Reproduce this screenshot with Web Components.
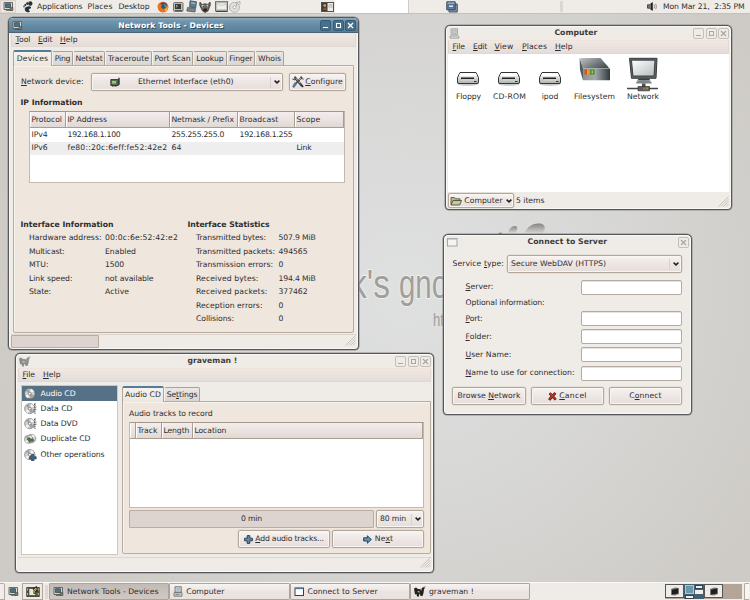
<!DOCTYPE html>
<html lang="en"><head><meta charset="utf-8"><title>Desktop</title>
<style>
html,body{margin:0;width:750px;height:600px;overflow:hidden}
body{font:7.7px "DejaVu Sans",sans-serif;color:#2d2d2d}
</style></head><body>
<desk-top></desk-top>
<script>
const make=(name,css,html,init)=>customElements.define(name,class extends HTMLElement{
  connectedCallback(){
    if(this.shadowRoot)return;
    const a=k=>this.getAttribute(k)||'';
    this.attachShadow({mode:'open'}).innerHTML=`<style>*{box-sizing:border-box}${css}</style>`+(typeof html==='function'?html(a):html);
    if(init)init(this,a);
  }
});

/* Text run spaced to an exact width */
make('tx-t',':host{display:inline-block;white-space:pre;flex:none;line-height:12px}:host([b]){font-weight:bold}span{display:inline-block}::slotted(u){text-decoration:underline;text-underline-offset:1px}','<span><slot></slot></span>',(el,a)=>{
  const w=+a('w');if(!w)return;
  const s=el.shadowRoot.querySelector('span'),n=el.textContent.length;
  s.style.letterSpacing=(w-s.getBoundingClientRect().width)/n+'px';
  el.style.width=w+'px';
});

const monitor='<path d="M1 1.5h8.5v7H1z" fill="#d5d6ce" stroke="#5c5f58" stroke-width=".9"/><path d="M2.5 2.7h5v3.8h-5z" fill="#4c7185" stroke="#2d3f48" stroke-width=".7"/><path d="M2.8 9.2h6" stroke="#4b4b46"/><path d="M7 6.5h3v3H7z" fill="#757a70" stroke="#444" stroke-width=".5"/>';
const disc='<ellipse cx="5.8" cy="5.6" rx="5.2" ry="5" fill="#d0d0d0" stroke="#666" stroke-width=".6"/><path d="M5.8 5.6L1.5 3A5 5 0 0 1 5 .8zM5.8 5.6l4.5 2a5 5 0 0 1-4 3z" fill="#a3a3a3"/><path d="M5.8 5.6L7 .9a5 5 0 0 1 2.9 2.3zM5.8 5.6l-2 4.4a5 5 0 0 1-2.3-2z" fill="#f5f5f5"/><circle cx="5.8" cy="5.6" r="1.5" fill="#eee" stroke="#555" stroke-width=".6"/>';
const animal=c=>`<g fill="${c}"><path d="M0 2.500l2-1 2 1.500 3 .3 2-2.300 2.500-.5L10 3.500 9.500 7 8.500 10H6.500L6 8 5 8.500V10.500H3L2.500 8 1 8.500z"/></g><path d="M3 6l2-1 1 1.500zM8.500 2l1.800-1L11 1.500z" fill="#dfe0d8"/><path d="M6 4l2-1v1.500z" fill="#c5b045"/>`;
const drive='<defs><linearGradient id="d" x2="0" y2="1"><stop stop-color="#fff"/><stop offset="1" stop-color="#aeb1ae"/></linearGradient></defs><ellipse cx="12" cy="12.6" rx="11" ry="2.3" fill="#ccc"/><path d="M4 1.500h16l2.500 5v4.500q0 1.500-1.500 1.500H3q-1.500 0-1.500-1.500V6.500z" fill="url(#d)" stroke="#343434" stroke-width="1"/><path d="M4 2.500h16l1 2.500H3z" fill="#fff"/><path d="M5 7.300h13" stroke="#222" stroke-width="1.800"/><path d="M5.500 8.700h12.500" stroke="#fff" stroke-width=".6"/><path d="M18 10.500h2.500" stroke="#333"/>';
const ICONS={
 monitor:[11,11,monitor],
 foot:[10,12,'<g fill="#26333a"><ellipse cx="7.300" cy="2.500" rx="2.200" ry="2.200"/><ellipse cx="4.200" cy="2.500" rx="1" ry="1.500"/><ellipse cx="2.300" cy="3.900" rx=".85" ry="1.200"/><ellipse cx="1" cy="5.500" rx=".7" ry="1"/><path d="M1.700 7.500C3 5 7.500 4.600 8 6.300c.4 1.500-2 1.400-2.200 2.500-.1.900 1 .5 1 1.500C6.500 12 2.800 11.500 2 9.500z"/></g>'],
 firefox:[12,12,'<circle cx="6" cy="6" r="5.300" fill="#d9581b"/><circle cx="6.400" cy="5" r="3.600" fill="#27557f"/><path d="M7 2.500l2.500 2L8 7z" fill="#5f9bc5"/><path d="M.8 4C1.500 2.500 2.500 2 3.500 3.200L5.500 3.500 4 5.500 5 7.500c2 1 4-.4 4.500-2.500L11 4c1 4-1.500 7.300-5 7.300C2.500 11.300.3 8 .8 4z" fill="#e8751d"/><path d="M8 8.500q2-1 2.500-3.500.7 3.500-2.500 5.500z" fill="#f7c33a"/>'],
 term:[11,10,'<rect x=".5" y=".5" width="9.500" height="9" rx="1" fill="#bcb9b0" stroke="#77736c"/><path d="M2 2h6v5H2z" fill="#3a3a38"/><path d="M3 3.200l1.500 1L3 5.200" stroke="#ddd" fill="none" stroke-width=".7"/><path d="M2 8.500h7" stroke="#555"/>'],
 net:[12,13,'<path d="M4 .8l6.500 1-.8 6-6-.8z" fill="#587f96" stroke="#40494d" stroke-width=".8"/><path d="M5 2l4.500.8-.2 1.500L5 3.600z" fill="#95b4c2"/><path d="M1.500 7.500l8 1L9 12 .8 11z" fill="#7c8587" stroke="#464c50" stroke-width=".7"/>'],
 gimp:[12,12,'<path d="M1 1l2 2.500Q6 2 9 3.500L11 1q1 3-.5 5L9 10l-3 1.500L3.500 10 1.500 6Q0 3.500 1 1z" fill="#69645b" stroke="#35322e" stroke-width=".7"/><circle cx="4" cy="5" r="1.300" fill="#ddd"/><circle cx="8" cy="5" r="1.200" fill="#ddd"/><circle cx="4.300" cy="5.200" r=".7" fill="#222"/><circle cx="7.800" cy="5.200" r=".7" fill="#222"/><ellipse cx="6.200" cy="9" rx="2" ry="1.400" fill="#27231f"/>'],
 mail:[13,11,'<rect x=".5" y=".7" width="12" height="9.300" fill="#cfcfca" stroke="#6c6c67"/><rect x="1.800" y="2" width="9.400" height="6.700" fill="#efefeb" stroke="#aaa" stroke-width=".5"/><path d="M1.500 3l5 1.500 5-1.500" stroke="#b5b5b0" fill="none" stroke-width=".6"/><path d="M1 10.500h11.500" stroke="#444"/>'],
 cd:[12,12,'<circle cx="5.500" cy="6.300" r="5" fill="#e0e0de" stroke="#a0a09d" stroke-width=".7"/><circle cx="5.500" cy="6.300" r="1.500" fill="#fff" stroke="#888" stroke-width=".6"/><path d="M7.500 5V1.500l3.500-1v3" stroke="#aaa" fill="none" stroke-width=".9"/>'],
 card:[13,10,'<rect x=".5" y=".5" width="12" height="9" fill="#eeece6" stroke="#55534e"/><path d="M1 1h5.500v8H1z" fill="#3e3b36"/><circle cx="3.700" cy="3.500" r="1.400" fill="#c49570"/><path d="M2 8q0-3 3.500-2.500V8z" fill="#9b4c28"/><path d="M7.500 3h4M7.500 5h2M10 5h1.500" stroke="#888" stroke-width=".7"/>'],
 winlist:[12,12,'<path d="M3 3h8.300v8H3z" fill="#8b98ac" stroke="#455"/><path d="M.8.800h8.400v8H.800z" fill="#5e7fa8" stroke="#37455c"/><path d="M1.500 1.500h7v1.200h-7z" fill="#a9bdd4"/><path d="M2.500 4h5v2.500h-5z" fill="#dce5ef" stroke="#37455c" stroke-width=".6"/>'],
 speaker:[11,9,'<path d="M.5 2.800h2L5.500.500v8l-3-2.300h-2z" fill="#777" stroke="#222" stroke-width=".7"/><path d="M4.500 1v7" stroke="#222"/><path d="M7 2.500q1 2 0 4M8.700 1.800q1.400 2.700 0 5.400" fill="none" stroke="#777" stroke-width=".8"/>'],
 pcoff:[11,11,'<g fill="#dcdbd8" stroke="#9b9b98" stroke-width=".8"><path d="M2 .800h6.500v6H2zM1 8h8.800v2.200H1z"/><path d="M3.500 2h3.700v3.500H3.500z" fill="#bccbd5" stroke-width=".4"/></g>'],
 winoff:[11,9,'<rect x=".5" y=".5" width="9.500" height="7.500" fill="#f4f4f2" stroke="#a5a5a2"/><path d="M1 1.300h8.500" stroke="#bcc8d2"/>'],
 win:[11,10,'<rect x="1" y="1" width="8.500" height="7.500" fill="#fff" stroke="#3a4043"/><path d="M1 1.500h8.500" stroke="#52799a" stroke-width="1.300"/>'],
 animaloff:[12,11,animal('#8e8e8a')],
 animal:[12,11,animal('#23221d')],
 card2:[11,10,'<path d="M.8 2.500h7.500v6H.800z" fill="#54714a" stroke="#222d1c" stroke-width=".8"/><path d="M2 4h4v2.500H2z" fill="#a2c28d"/><path d="M9 .800v7" stroke="#222" stroke-width="1.300"/><path d="M2 9h5" stroke="#222" stroke-dasharray="1 .5"/>'],
 tools:[12,12,'<path d="M2.500 1l7.500 9" stroke="#3c3f40" stroke-width="2.200"/><path d="M3 1.300l5 6" stroke="#bfc1c0" stroke-width="1"/><path d="M10 .8L3 8.500" stroke="#444" stroke-width="1.800"/><path d="M9.500 1.500L7 4" stroke="#b8b8b8" stroke-width=".9"/><path d="M3.500 7.500L1.800 10.300" stroke="#53779b" stroke-width="2.600" stroke-linecap="round"/><path d="M.3 3l2.700 1 1-2-1-1.500M9 .5l.5 2.300L11.700 3" fill="none" stroke="#3f4243" stroke-width=".9"/><path d="M9.500 9.500l1.800 1.300" stroke="#333" stroke-width="1.600"/>'],
 arrow:[6,4,'<path d="M.6.600L3 2.900 5.400.600" fill="none" stroke="#222" stroke-width="1.500"/>'],
 drive:[25,15,drive],
 fs:[32,25,'<defs><linearGradient id="f"><stop stop-color="#8b9293"/><stop offset=".45" stop-color="#a1a9aa"/><stop offset="1" stop-color="#30393b"/></linearGradient><linearGradient id="g" x2="1" y2=".6"><stop stop-color="#c0c5c6"/><stop offset="1" stop-color="#454d4f"/></linearGradient></defs><path d="M1 1h20.500L31 12H4z" fill="url(#g)"/><path d="M4 11.500h27v11.800H4z" fill="url(#f)"/><path d="M.6 1L4 11.500v11.800L1 13z" fill="#535c5e"/><path d="M4 11.500h27" stroke="#c3cacb" stroke-width=".6"/><path d="M5.500 12.500h4.500v5H5.500z" fill="#de4e20"/><path d="M8 12.500h2v5H8z" fill="#f49b2c"/><path d="M11 12.500h4.500v5H11z" fill="#3d8b36"/><path d="M12.500 13.500H14v3h-1.500z" fill="#a4d24d"/>'],
 network:[32,35,'<defs><linearGradient id="n" x2="1" y2="1"><stop stop-color="#fff"/><stop offset="1" stop-color="#b7bcbe"/></linearGradient></defs><path d="M2.500 1.300h27.500l-1 20H4.500z" fill="#62686a" stroke="#363b3c"/><path d="M4.500 3.200h23.500l-1 15.800H6z" fill="url(#n)" stroke="#24292b" stroke-width=".8"/><path d="M12 21.500h10l1.500 2H10z" fill="#3a3f40"/><path d="M9.500 24.500q7-3 14.500 0l1 2H9z" fill="#808586"/><path d="M15 26.500h3.500v4H15z" fill="#4b5051"/><path d="M0 31.500h31" stroke="#424647" stroke-width="1.600"/><path d="M11 29.500h11.500v4.300H11z" fill="#5a5f60" stroke="#333" stroke-width=".7"/><path d="M16 30.500h2.500v2H16z" fill="#e7552d"/><path d="M19 30.500h2v2h-2z" fill="#63a538"/>'],
 folder:[12,10,'<path d="M1 8.500V1.500h3.500l1 1.300H10V5" fill="#b8b98d" stroke="#4d4f38" stroke-width=".8"/><path d="M1 9l2-4.500h8.500L9.700 9z" fill="#c8c99d" stroke="#3f412e" stroke-width=".8"/>'],
 cross:[9,9,'<path d="M1.500 1.200Q4.500 3.500 7.700 7.800M7.500 1Q3.500 4.500 1.200 8" stroke="#4c1b14" stroke-width="2.700" fill="none"/><path d="M1.700 1.400Q4.500 3.500 7.500 7.600M7.300 1.300Q3.500 4.500 1.500 7.700" stroke="#bd3b26" stroke-width="1.500" fill="none"/>'],
 plus:[9,9,'<path d="M3.200.600h2.600v2.600h2.600v2.600H5.800v2.600H3.200V5.800H.600V3.200h2.600z" fill="#6288a8" stroke="#263848" stroke-width=".9"/>'],
 next:[9,9,'<path d="M.6 2.800h3.800V.800l4 3.700-4 3.700V6H.600z" fill="#5d92bd" stroke="#22384a" stroke-width=".9"/>'],
 disc:[13,12,disc],
 discdata:[13,12,disc+'<path d="M10 1.500h2M10 4h2.400M9.500 6.500h2.800M9.500 9h2M11 0v11" stroke="#555" stroke-width=".9" stroke-dasharray="1.300 .7"/>'],
 discdup:[13,12,'<g transform="translate(2.500 .8) scale(.85)">'+disc+'</g><g transform="translate(0 1.800) scale(.8)">'+disc+'</g><path d="M3 6l3-1.500V6h3v2H6v1.500z" fill="#527a43" stroke="#2e4028" stroke-width=".5"/>'],
 discplus:[13,12,disc+'<path d="M7.600 5.500h2.300v2.200h2.300V10H9.900v2H7.600v-2H5.500V7.700h2.100z" fill="#3e658a" stroke="#20384e" stroke-width=".6"/>'],
 pc:[10,11,'<path d="M2 .700h6.300v5.500H2zM1 6.700h8v3.500H1z" fill="#d0d2d0" stroke="#62676a" stroke-width=".8"/><path d="M3.300 2h3.700v2.500H3.300z" fill="#a8bdca"/><path d="M2.500 8.500h4" stroke="#666" stroke-width=".7"/>'],
 lock:[14,12,'<path d="M.7 1.500h12.600v9H.700z" fill="#56583f" stroke="#333" stroke-width=".8"/><path d="M3 2.500h6.500v7H3z" fill="#e8e7df" stroke="#222" stroke-width=".5"/><path d="M7 3.500l3-2 .8 3-2.300.7v2.500" stroke="#1e1e17" stroke-width="2" fill="none"/><path d="M7.500 4l2.500-2v2.300l-1.500.9v1.500" stroke="#e5c04a" fill="none"/><path d="M1.600 2.500v2M1.600 7v2M12.300 2.500v2M12.300 7v2" stroke="#c4c591"/>'],
 grip:[11,11,'<path d="M10.500 .500l-10 10M10.500 3l-7.500 7.500M10.500 5.500l-5 5M10.500 8l-2.500 2.500" stroke="#bdb8b0" stroke-width=".8"/>'],
 mini:[10,9,'<path d="M1 2l4-1.500 4 .5v6L5 8.500 1 8z" fill="#777"/><path d="M2 2.800l6-1.300v5L2 7.500z" fill="#1d1d1d"/>']
};
make('ic-n',':host{display:inline-block;flex:none;line-height:0}svg{display:block}',a=>{const[w,h,s]=ICONS[a('n')];return`<svg width="${w}" height="${h}" viewBox="0 0 ${w} ${h}" fill="none">${s}</svg>`});

/* Row box: width, height and inset from the left */
make('r-ow',':host{display:flex;align-items:center;flex:none}','<slot></slot>',(el,a)=>{
  for(const[k,p]of[['h','height'],['w','width'],['p','paddingLeft'],['m','marginLeft'],['t','marginTop']])if(el.hasAttribute(k))el.style[p]=a(k)+'px';
});

make('app-window',`
:host{position:absolute;display:flex;flex-direction:column;border:1px solid #55575a;border-radius:5px 5px 4px 4px;background:#efebe7;box-shadow:inset 0 0 0 1px #f9f8f6,0 0 0 .5px #8b8b88;overflow:hidden}
header{height:14px;flex:none;display:flex;align-items:center;padding:0 2px 0 3px;color:#3c3c3c}
:host([active]) header{height:15px;background:linear-gradient(#8cabbf 0,#7196ae 20%,#557d96);color:#fff;text-shadow:1px 1px #31505f;box-shadow:inset 0 -1px #456476}
div{flex:1;display:flex;justify-content:center}
i{width:11px;height:11px;flex:none;border:1px solid #c4bfb9;border-radius:2px;margin-left:1.400px;display:grid;place-items:center;color:#aaa7a2}
:host([active]) i{background:#48708a;border-color:#365b72;color:#fff}
b{display:block;width:5px;height:5px}
.m{border-bottom:1.500px solid}.x{border:1px solid;border-top-width:1.500px}
svg{display:block}
section{display:flex;flex-direction:column;flex:1;padding:0 2px}`,
a=>`<header><ic-n n="${a('icon')}"></ic-n><div><tx-t b w="${a('tw')}">${a('label')}</tx-t></div>${a('only')?'':'<i><b class="m"></b></i><i><b class="x"></b></i>'}<i><svg width="7" height="7"><path d="M1 1l5 5M6 1L1 6" stroke="currentColor" stroke-width="1.300"/></svg></i></header><section><slot></slot></section>`,
(el,a)=>{const[x,y,w,h]=a('box').split(',');Object.assign(el.style,{left:x+'px',top:y+'px',width:w+'px',height:h+'px'})});

make('menu-bar',':host{display:flex;align-items:center;height:14px;flex:none;background:linear-gradient(#f1e8e2,#e4dcda);border:1px solid #e3d8d0;border-top-color:#eee4dd;padding-left:3.500px}','<slot></slot>');
make('push-btn',':host{display:flex;align-items:center;justify-content:center;flex:none;border:1px solid #b3a79c;border-radius:2px;background:linear-gradient(#f6f4f2,#efe9e7 40%,#e6dedb);box-shadow:inset 0 0 0 1px #f8f5f2,0 0 0 .5px #ddd5cc;gap:2px}','<slot></slot>',(el,a)=>{el.style.width=a('w')+'px';el.style.height=(a('h')||18)+'px'});
make('combo-box',':host{display:flex;align-items:center;flex:none;border:1px solid #b3a79c;border-radius:2px;background:linear-gradient(#f6f4f2,#efe7e5 40%,#e6dedb);box-shadow:inset 0 0 0 1px #f8f5f2,0 0 0 .5px #ddd5cc}span{flex:1;display:flex;align-items:center}em{width:12px;height:11px;border-left:1px solid #d9d1cb;display:grid;place-items:center}','<span><slot></slot></span><em><ic-n n="arrow"></ic-n></em>',(el,a)=>{el.style.width=a('w')+'px';el.style.height=(a('h')||18)+'px'});
make('tab-head',':host{display:flex;align-items:center;justify-content:center;flex:none;height:14px;border:1px solid #aaa198;border-bottom:0;border-left-color:#f7f4f0;border-radius:2px 2px 0 0;background:linear-gradient(#ece7e3,#dcd6d1)}:host([on]){height:16px;border-color:#b3a79c;border-top:2px solid #567b94;background:linear-gradient(#f5f2ef,#efe6dd);margin-bottom:-1px;position:relative}','<slot></slot>',(el,a)=>el.style.width=a('w')+'px');
make('tab-panel',':host{display:flex;flex-direction:column;flex:none;background:#efe6dd;border:1px solid #b8aca0;box-shadow:inset 1px 1px #f7f2ec;border-radius:0 0 2px 2px}','<slot></slot>',(el,a)=>{el.style.width=a('w')+'px';el.style.height=a('h')+'px'});
make('text-entry',':host{display:block;flex:none;width:101px;height:15px;background:#fff;border:1px solid #b4aaa0;border-radius:2px;box-shadow:inset 0 1px #e7e3df}','');

/* Table: cols = widths; head/row cells are "text~width" separated by | */
make('data-grid',`:host{display:block;flex:none;background:#fff;border:1px solid #c5b9ae;border-top-color:#a3968b}
.r{display:grid;align-items:center;height:13.500px}.e{background:#eee}
.h{height:16px;background:linear-gradient(#f3eded,#e9e1de 60%,#e0d8d2);border-bottom:1px solid #a99d92}
.h span{height:15px;display:flex;align-items:center;border-right:1px solid #a99d92;border-left:1px solid #fff;padding-left:.400px}
.d{padding-left:1.500px}span{white-space:nowrap}`,
a=>{const g=a('cols').split(',').map(v=>v+'px').join(' ');
const row=(s,c)=>`<div class="r ${c}" style="grid-template-columns:${g}">${s.split('|').map(t=>{const[x,w]=t.split('~');return`<span>${x?`<tx-t w="${w}">${x}</tx-t>`:''}</span>`}).join('')}</div>`;
return row(a('head'),'h')+(a('rows')?a('rows').split(';').map((r,i)=>row(r,i%2?'d e':'d')).join(''):'')},
(el,a)=>{el.style.width=a('w')+'px';el.style.height=a('h')+'px'});

make('info-list',':host{display:grid;grid-auto-rows:13.500px;align-items:center}',a=>a('rows').split('|').map(r=>{const[l,lw,v,vw]=r.split('~');return`<tx-t w="${lw}">${l}</tx-t><tx-t w="${vw}">${v}</tx-t>`}).join(''),(el,a)=>el.style.gridTemplateColumns=a('cols'));

make('side-list',`:host{display:block;width:97px;height:170px;background:#fff;border:1px solid #cfc6be;flex:none}
div{height:15.250px;display:flex;align-items:center;gap:3.500px;padding-left:2px}div:first-of-type{background:#567085;color:#fff}`,
()=>[['disc','Audio CD',35],['discdata','Data CD',32],['discdata','Data DVD',37],['discdup','Duplicate CD',50],['discplus','Other operations',64]].map(([i,t,w])=>`<div><ic-n n="${i}"></ic-n><tx-t w="${w}">${t}</tx-t></div>`).join(''));

make('file-item',':host{display:flex;flex-direction:column;align-items:center;justify-content:flex-end;height:46px;flex:none;gap:3px}ic-n{display:flex;align-items:center}',a=>`<ic-n n="${a('icon')}"></ic-n><tx-t w="${a('tw')}">${a('label')}</tx-t>`,(el,a)=>{el.style.width=a('w')+'px';el.shadowRoot.querySelector('ic-n').style.marginBottom=a('up')+'px'});
make('status-grip',':host{margin-left:auto;align-self:flex-end;display:block}','<ic-n n="grip"></ic-n>');
make('progress-bar',':host{display:flex;align-items:center;justify-content:center;flex:none;background:#ddd3cf;border:1px solid #b9aca2;border-radius:1px}','<slot></slot>',(el,a)=>{el.style.width=a('w')+'px';el.style.height=a('h')+'px'});

make('form-row',':host{display:flex;align-items:center;justify-content:space-between;height:18.150px;padding:0 7px 0 19.500px;flex:none}',`<slot></slot><text-entry></text-entry>`);

make('top-panel',`:host{position:absolute;left:0;top:0;width:750px;height:14px;display:flex;align-items:center;background:#efebe7;border-bottom:1px solid #c4c1ba}
.b{width:16px;height:13px;border:1px solid #ddd4d0;background:#eee5e2;display:grid;place-items:center;flex:none}
.s{width:74px;height:13px;background:#fff;border-right:1px solid #ccc;margin-left:1px;flex:none}.q{width:3px;height:11px;background:#ded6d2;margin-left:102px;flex:none}`,
`<div class="b"><ic-n n="monitor"></ic-n></div><r-ow m="7"><ic-n n="foot"></ic-n><r-ow m="4"><tx-t w="45.500">Applications</tx-t></r-ow><r-ow m="5"><tx-t w="25">Places</tx-t></r-ow><r-ow m="6"><tx-t w="31">Desktop</tx-t></r-ow></r-ow>
<r-ow m="7"><ic-n n="firefox"></ic-n></r-ow><r-ow m="4"><ic-n n="term"></ic-n></r-ow><r-ow m="2"><ic-n n="net"></ic-n></r-ow><r-ow m="1"><ic-n n="gimp"></ic-n></r-ow><r-ow m="4"><ic-n n="mail"></ic-n></r-ow><r-ow m="1"><ic-n n="cd"></ic-n></r-ow>
<r-ow m="80"><ic-n n="card"></ic-n></r-ow><div class="s"></div><r-ow m="37"><ic-n n="winlist"></ic-n></r-ow><div class="q"></div><r-ow m="84.500"><ic-n n="speaker"></ic-n></r-ow><r-ow m="5"><tx-t w="81.500">Mon Mar 21,  2:35 PM</tx-t></r-ow>`);

make('task-btn',':host{display:flex;align-items:center;gap:3px;width:120.300px;height:17px;flex:none;border:1px solid #aea49b;border-radius:1px;background:linear-gradient(#f6f3f1,#ece4e2 50%,#e9e2de);padding-left:3px}:host([on]){background:linear-gradient(#c3bbb6,#d0c8c3)}',a=>`<ic-n n="${a('icon')}"></ic-n><tx-t w="${a('tw')}">${a('label')}</tx-t>`);
make('task-bar',`:host{position:absolute;left:0;top:582px;width:750px;height:18px;display:flex;align-items:flex-end;background:#efebe7;border-top:1px solid #faf8f6}
.n{width:5px;height:17px;border:1px solid #b5aaa1;border-left:0;border-radius:0 2px 0 0;background:#f2edea;flex:none}
.m{width:17px;height:17px;display:grid;place-items:center;flex:none}.l{width:21px;height:17px;border:1px solid #b0a69d;background:#efe8e5;display:grid;place-items:center;flex:none}
.q{width:3px;height:14px;background:#dfd7d3;margin:0 1.500px 1px;flex:none}
.p{display:flex;width:77px;height:15px;background:#b5a599;margin:0 2px 1px 135px;flex:none}
.w{width:19px;height:14px;background:#efebe7;border:1px solid #555;display:grid;place-items:center}
.a{width:20px;height:15px;background:#46606f;display:grid;grid-template:9px 4px/9px 8px;gap:1px;padding:.500px 1px;flex:none}.a b{background:#efefee;border:1px solid #34444e}.a b:first-child{background:#6a96b0;border-color:#b1c5d0}.a b:nth-child(2){height:4px;box-shadow:0 5px #efefee}
.e{width:5px;height:17px;border:1px solid #b5aaa1;border-right:0;border-radius:2px 0 0 0;background:#f8f5f3;flex:none}`,
`<div class="n"></div><div class="m"><ic-n n="monitor"></ic-n></div><div class="l"><ic-n n="lock"></ic-n></div><div class="q"></div><task-btn on icon="monitor" label="Network Tools - Devices" tw="91.500"></task-btn><task-btn icon="pc" label="Computer" tw="38"></task-btn><task-btn icon="win" label="Connect to Server" tw="70"></task-btn><task-btn icon="animal" label="graveman !" tw="45"></task-btn>
<div class="p"><div class="w"><ic-n n="mini"></ic-n></div><div class="a"><b></b><b></b><b></b></div><div class="w"><ic-n n="mini"></ic-n></div></div><div class="e"></div>`);

make('wall-paper',':host{position:absolute;inset:0;background:radial-gradient(ellipse 420px 430px at 405px 290px,#dfe0e0 0,#d8d8d7 45%,#cecbc6 100%)}svg{display:block}',
`<svg width="750" height="600" fill="none"><defs><linearGradient id="t" x2="0" y2="1"><stop stop-color="#858583"/><stop offset="1" stop-color="#ecebea"/></linearGradient></defs>
<path d="M524 236c1-9 10-14 18-12 5 2 3 8-3 12z" fill="url(#t)"/><path d="M508 235c0-7 6-11 9-8 1 3-1 5-4 8z" fill="url(#t)"/><path d="M496 236q3-5 6-3v3z" fill="#777"/>
<g font-family="Liberation Sans Narrow,Liberation Sans,sans-serif" fill="#a19f9b"><g font-size="40" stroke="#eeeeed" stroke-width="2" paint-order="stroke"><text x="350" y="297.500" textLength="40" lengthAdjust="spacingAndGlyphs">k's</text><text x="399" y="297.500" textLength="49" lengthAdjust="spacingAndGlyphs">gno</text></g><text x="433" y="326" font-size="18" textLength="11" lengthAdjust="spacingAndGlyphs">ht</text></g></svg>`);

make('desk-top',':host{display:block;position:relative;width:750px;height:600px;overflow:hidden}.row{display:flex}.tabs{display:flex;align-items:flex-end;flex:none}.fill{flex:1;background:#fff;display:flex;align-items:flex-start}.bar{display:flex;align-items:center;flex:none}.hr{border-top:1px solid #ddd5ce}',
`<wall-paper></wall-paper><top-panel></top-panel>
<app-window active icon="monitor" label="Network Tools - Devices" tw="105.500" box="8,17,351,333">
 <menu-bar><tx-t w="15"><u>T</u>ool</tx-t><r-ow m="7.500"><tx-t w="14.500"><u>E</u>dit</tx-t></r-ow><r-ow m="7.500"><tx-t w="17.500"><u>H</u>elp</tx-t></r-ow></menu-bar>
 <div class="tabs" style="height:18px;padding-left:2px;margin-bottom:0">
 <tab-head on w="39"><tx-t w="31.500">Devices</tx-t></tab-head><tab-head w="21"><tx-t w="15.500">Ping</tx-t></tab-head><tab-head w="32"><tx-t w="27">Netstat</tx-t></tab-head><tab-head w="47"><tx-t w="41">Traceroute</tx-t></tab-head><tab-head w="41"><tx-t w="36">Port Scan</tx-t></tab-head><tab-head w="34"><tx-t w="27.500">Lookup</tx-t></tab-head><tab-head w="28"><tx-t w="23.500">Finger</tx-t></tab-head><tab-head w="29"><tx-t w="23">Whois</tx-t></tab-head></div>
 <tab-panel w="341" h="268" style="margin-left:2px">
  <r-ow h="18" t="7" p="7"><tx-t w="62.500"><u>N</u>etwork device:</tx-t><r-ow m="7.500"><combo-box w="192"><r-ow p="18"><ic-n n="card2"></ic-n></r-ow><r-ow m="17"><tx-t w="95.500">Ethernet Interface (eth0)</tx-t></r-ow></combo-box></r-ow><r-ow m="6"><push-btn w="57" style="gap:1px"><ic-n n="tools"></ic-n><tx-t w="37.500"><u>C</u>onfigure</tx-t></push-btn></r-ow></r-ow>
  <r-ow h="12" t="6" p="6.500"><tx-t b w="62">IP Information</tx-t></r-ow>
  <r-ow t="2" p="15"><data-grid w="316" h="72" cols="36,104,68,57,49" head="Protocol~30.500|IP Address~39.500|Netmask / Prefix~62.500|Broadcast~39|Scope~24" rows="IPv4~16|192.168.1.100~53|255.255.255.0~52.500|192.168.1.255~53|;IPv6~16|fe80::20c:6eff:fe52:42e2~100|64~10||Link~15"></data-grid></r-ow>
  <r-ow t="35" p="6.500" h="13.500"><tx-t b w="93">Interface Information</tx-t><r-ow m="74"><tx-t b w="82">Interface Statistics</tx-t></r-ow></r-ow>
  <r-ow p="15" style="align-items:flex-start"><info-list cols="76px 91px" rows="Hardware address:~72.500~00:0c:6e:52:42:e2~73|Multicast:~35.500~Enabled~31|MTU:~19.500~1500~19|Link speed:~43.500~not available~48.500|State:~22~Active~24"></info-list>
  <info-list cols="82.500px 50px" rows="Transmitted bytes:~70~507.9 MiB~37|Transmitted packets:~79~494565~29|Transmission errors:~77~0~5|Received bytes:~62.500~194.4 MiB~37|Received packets:~71.500~377462~29|Reception errors:~66.500~0~5|Collisions:~38~0~5"></info-list></r-ow>
 </tab-panel>
 <div class="bar hr" style="margin-top:1px;height:14px"><progress-bar w="88" h="13"></progress-bar><status-grip></status-grip></div>
</app-window>

<app-window icon="pcoff" label="Computer" tw="43" box="445,25,287,185">
 <menu-bar><tx-t w="12.500"><u>F</u>ile</tx-t><r-ow m="8"><tx-t w="14"><u>E</u>dit</tx-t></r-ow><r-ow m="7.500"><tx-t w="19"><u>V</u>iew</tx-t></r-ow><r-ow m="8.500"><tx-t w="25"><u>P</u>laces</tx-t></r-ow><r-ow m="8"><tx-t w="17.500"><u>H</u>elp</tx-t></r-ow></menu-bar>
 <div class="fill" style="padding:3px 0 0 0"><file-item w="41" up="2" icon="drive" label="Floppy" tw="25"></file-item><file-item w="41" up="2" icon="drive" label="CD-ROM" tw="33"></file-item><file-item w="40" up="2" icon="drive" label="ipod" tw="16.500"></file-item><file-item w="49" up="6" icon="fs" label="Filesystem" tw="41"></file-item><file-item w="48" up="-4" icon="network" label="Network" tw="32"></file-item></div>
 <div class="bar" style="height:17px"><push-btn w="66" h="15"><ic-n n="folder"></ic-n><tx-t w="38.500">Computer</tx-t><r-ow m="1"><ic-n n="arrow"></ic-n></r-ow></push-btn><r-ow m="2"><tx-t w="28.500">5 items</tx-t></r-ow><status-grip></status-grip></div>
</app-window>

<app-window only="1" icon="winoff" label="Connect to Server" tw="79.500" box="443,234,249,181">
 <r-ow h="18" t="6" p="6.500"><tx-t w="51.500">Service <u>t</u>ype:</tx-t><r-ow m="3"><combo-box w="175"><r-ow p="3"><tx-t w="95">Secure WebDAV (HTTPS)</tx-t></r-ow></combo-box></r-ow></r-ow>
 <form-row style="margin-top:5px"><tx-t w="28"><u>S</u>erver:</tx-t></form-row>
 <r-ow h="13.500" p="19.500"><tx-t w="79">Optional information:</tx-t></r-ow>
 <form-row><tx-t w="17"><u>P</u>ort:</tx-t></form-row><form-row><tx-t w="26.500"><u>F</u>older:</tx-t></form-row><form-row><tx-t w="46"><u>U</u>ser Name:</tx-t></form-row><form-row><tx-t w="109"><u>N</u>ame to use for connection:</tx-t></form-row>
 <r-ow h="18" t="5" p="6"><push-btn w="74"><tx-t w="63">Browse <u>N</u>etwork</tx-t></push-btn><r-ow m="5"><push-btn w="73"><ic-n n="cross"></ic-n><tx-t w="27.500"><u>C</u>ancel</tx-t></push-btn></r-ow><r-ow m="5"><push-btn w="73"><tx-t w="32.500">C<u>o</u>nnect</tx-t></push-btn></r-ow></r-ow>
</app-window>

<app-window icon="animaloff" label="graveman !" tw="50" box="15,353,419,220">
 <menu-bar><tx-t w="12.500"><u>F</u>ile</tx-t><r-ow m="8"><tx-t w="17.500"><u>H</u>elp</tx-t></r-ow></menu-bar>
 <div class="row" style="padding:3px 0 0 3px"><side-list></side-list><div style="margin-left:4px">
  <div class="tabs" style="height:16px"><tab-head on w="42"><tx-t w="36">Audio CD</tx-t></tab-head><tab-head w="36"><tx-t w="30.500">Se<u>t</u>tings</tx-t></tab-head></div>
  <tab-panel w="309" h="153"><r-ow h="12" t="6" p="6"><tx-t w="83.500">Audio tracks to record</tx-t></r-ow><r-ow t="2" p="6"><data-grid w="295" h="86" cols="6,26,31,230" head="|Track~20|Length~26|Location~32"></data-grid></r-ow>
  <r-ow t="2" p="6"><progress-bar w="245" h="18"><tx-t w="21">0 min</tx-t></progress-bar><r-ow m="2"><combo-box w="48"><r-ow p="3"><tx-t w="26">80 min</tx-t></r-ow></combo-box></r-ow></r-ow>
  <r-ow t="2" p="115"><push-btn w="92"><ic-n n="plus"></ic-n><tx-t w="68.500"><u>A</u>dd audio tracks...</tx-t></push-btn><r-ow m="2"><push-btn w="92" style="gap:3px"><ic-n n="next"></ic-n><tx-t w="18.500">Ne<u>x</u>t</tx-t></push-btn></r-ow></r-ow></tab-panel></div></div>
 <div class="bar hr" style="margin-top:2px;height:13px"><status-grip></status-grip></div>
</app-window>
<task-bar></task-bar>`);
</script></body></html>
